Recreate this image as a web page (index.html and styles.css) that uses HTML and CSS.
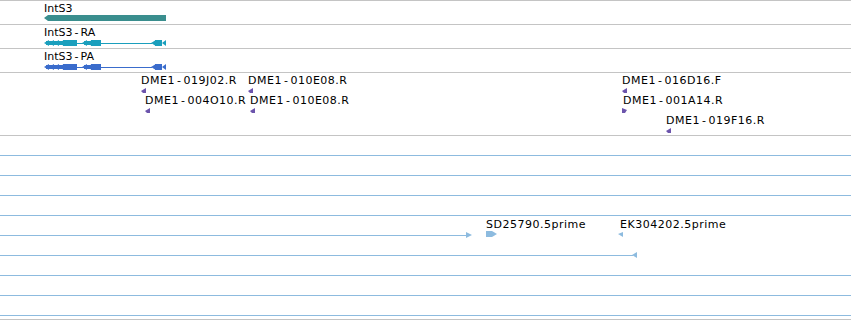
FILE: index.html
```html
<!DOCTYPE html>
<html lang="en">
<head>
  <meta charset="UTF-8">
  <title>IntS3 region</title>
  <link rel="stylesheet" href="styles.css">
</head>
<body>
  <div class="panel">

    <!-- gene -->
    <div class="track">
      <svg class="lane" width="851" height="23">
        <text x="44" y="11">IntS3</text>
        <polygon class="gene" points="44,17 48,14 166,14 166,20 48,20" />
      </svg>
    </div>

    <!-- transcripts -->
    <div class="track">
      <svg class="lane ra" width="851" height="23">
        <text x="44" y="11">IntS3<tspan dx="2">-</tspan><tspan dx="2">RA</tspan></text>
        <line x1="77" y1="18.5" x2="152" y2="18.5" />
        <rect x="46" y="16" width="20" height="4" />
        <polygon points="44,18 49,15 49,21" />
        <polygon points="49,18 54,15 54,21" />
        <polygon points="54,18 59,15 59,21" />
        <polygon points="59,18 64,15 64,21" />
        <rect x="63" y="15" width="14" height="6" />
        <rect x="84" y="16" width="8" height="4" />
        <polygon points="82,18 87,15 87,21" />
        <polygon points="87,18 92,15 92,21" />
        <rect x="91" y="15" width="10" height="6" />
        <polygon points="151,18 156,15 156,21" />
        <rect x="155" y="15" width="7" height="6" />
        <polygon points="162,18 166,15 166,21" />
      </svg>
    </div>

    <div class="track">
      <svg class="lane pa" width="851" height="23">
        <text x="44" y="11">IntS3<tspan dx="2">-</tspan><tspan dx="2">PA</tspan></text>
        <line x1="77" y1="18.5" x2="152" y2="18.5" />
        <rect x="46" y="16" width="20" height="4" />
        <polygon points="44,18 49,15 49,21" />
        <polygon points="49,18 54,15 54,21" />
        <polygon points="54,18 59,15 59,21" />
        <polygon points="59,18 64,15 64,21" />
        <rect x="63" y="15" width="14" height="6" />
        <rect x="84" y="16" width="8" height="4" />
        <polygon points="82,18 87,15 87,21" />
        <polygon points="87,18 92,15 92,21" />
        <rect x="91" y="15" width="10" height="6" />
        <polygon points="151,18 156,15 156,21" />
        <rect x="155" y="15" width="7" height="6" />
        <polygon points="162,18 166,15 166,21" />
      </svg>
    </div>

    <!-- ESTs -->
    <div class="track">
      <svg class="lane est" width="851" height="62">
        <text x="141" y="11">DME1<tspan dx="2">-</tspan><tspan dx="2">019J02.R</tspan></text>
        <polygon points="141,18 146,15 146,20 143,20" />
        <text x="248" y="11">DME1<tspan dx="2">-</tspan><tspan dx="2">010E08.R</tspan></text>
        <polygon points="248,18 253,15 253,20 250,20" />
        <text x="145" y="31">DME1<tspan dx="2">-</tspan><tspan dx="2">004O10.R</tspan></text>
        <polygon points="145,38 150,35 150,40 147,40" />
        <text x="250" y="31">DME1<tspan dx="2">-</tspan><tspan dx="2">010E08.R</tspan></text>
        <polygon points="250,38 255,35 255,40 252,40" />
        <text x="622" y="11">DME1<tspan dx="2">-</tspan><tspan dx="2">016D16.F</tspan></text>
        <polygon points="622,18 627,15 627,20 624,20" />
        <text x="623" y="31">DME1<tspan dx="2">-</tspan><tspan dx="2">001A14.R</tspan></text>
        <polygon points="627,37 622,35 622,40 625,40" />
        <text x="666" y="51">DME1<tspan dx="2">-</tspan><tspan dx="2">019F16.R</tspan></text>
        <polygon points="666,58 671,55 671,60 668,60" />
      </svg>
    </div>

    <!-- cDNA ends -->
    <div class="track">
      <svg class="lane cdna" width="851" height="183">
        <line x1="0" y1="19.5" x2="851" y2="19.5" />
        <line x1="0" y1="39.5" x2="851" y2="39.5" />
        <line x1="0" y1="59.5" x2="851" y2="59.5" />
        <line x1="0" y1="79.5" x2="851" y2="79.5" />
        <line x1="0" y1="99.5" x2="467" y2="99.5" />
        <polygon points="466,96 472,99 466,102" />
        <text x="486" y="92">SD25790.5prime</text>
        <polygon points="486,95 492,95 497,98 492,101 486,101" />
        <text x="620" y="92">EK304202.5prime</text>
        <polygon points="618,98 623,96 623,101" />
        <line x1="0" y1="119.5" x2="633" y2="119.5" />
        <polygon points="632,119 637,116 637,122" />
        <line x1="0" y1="139.5" x2="851" y2="139.5" />
        <line x1="0" y1="159.5" x2="851" y2="159.5" />
        <line x1="0" y1="179.5" x2="851" y2="179.5" />
      </svg>
    </div>

  </div>
</body>
</html>
```

FILE: styles.css
```css
body { margin: 0; background: #fff; }
.panel { width: 851px; height: 320px; border-bottom: 1px solid #c4c4c4; box-sizing: border-box; overflow: hidden; }
.track { border-top: 1px solid #c4c4c4; }
.lane { display: block; font-family: "DejaVu Sans", sans-serif; font-size: 11px; }
.lane text { fill: #000; }
.est text, .cdna text { letter-spacing: 0.5px; }
.gene { fill: #3a8e8e; }
.ra polygon, .ra rect { fill: #1a9fbd; }
.ra line { stroke: #1a9fbd; stroke-width: 1; }
.pa polygon, .pa rect { fill: #3a6ccc; }
.pa line { stroke: #3a6ccc; stroke-width: 1; }
.est polygon { fill: #6c54ac; }
.cdna line { stroke: #8dbbdf; stroke-width: 1; }
.cdna polygon { fill: #8dbbdf; }
```
